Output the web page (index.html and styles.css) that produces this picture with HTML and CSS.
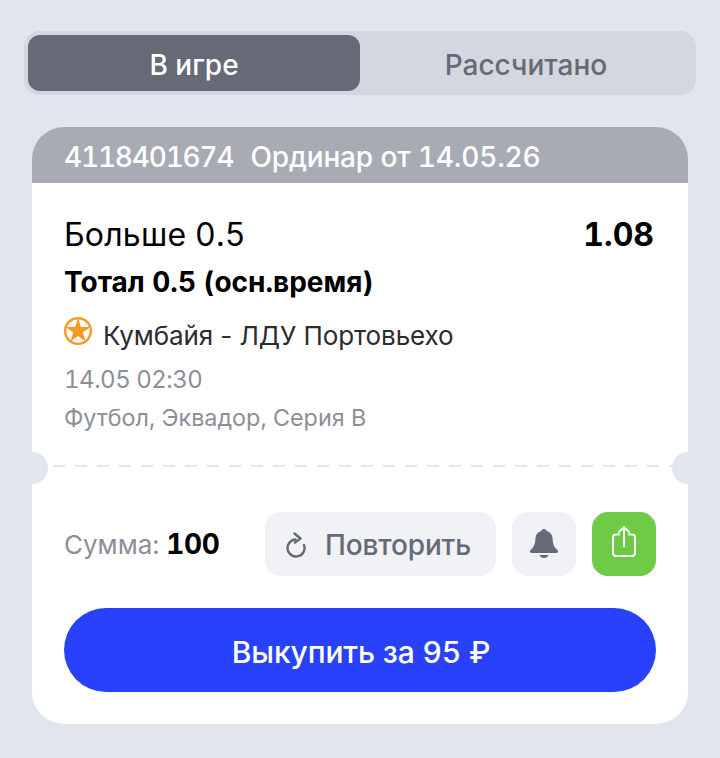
FILE: index.html
```html
<!DOCTYPE html>
<html lang="ru">
<head>
<meta charset="utf-8">
<title>Ставка</title>
<link rel="stylesheet" href="styles.css">
</head>
<body>
<main class="page">
  <nav class="tabs">
    <div class="tab tab-active">В игре</div>
    <div class="tab">Рассчитано</div>
  </nav>
  <article class="card">
    <header class="card-head"><span class="bet-id">4118401674</span><span class="bet-date">Ординар от 14.05.26</span></header>
    <section class="details">
      <div class="row-top"><span class="pick">Больше 0.5</span><span class="odds">1.08</span></div>
      <div class="market">Тотал 0.5 (осн.время)</div>
      <div class="match">
        <svg class="ball" viewBox="0 0 28 28" width="28" height="28" aria-hidden="true">
          <circle cx="14" cy="14" r="14" fill="#f59a23"/>
          <circle cx="14" cy="14" r="11.6" fill="#fff"/>
          <path d="M14 1 L16.9 10 L26.4 10 L18.8 15.5 L21.6 24.5 L14 19 L6.4 24.5 L9.2 15.5 L1.6 10 L11.1 10Z" fill="#f59a23"/>
        </svg>
        <span>Кумбайя - ЛДУ Портовьехо</span>
      </div>
      <div class="date">14.05 02:30</div>
      <div class="league">Футбол, Эквадор, Серия В</div>
    </section>
    <div class="divider">
      <span class="notch notch-left"></span>
      <span class="notch notch-right"></span>
    </div>
    <section class="footer">
      <div class="actions">
        <div class="sum">Сумма: <b>100</b></div>
        <div class="buttons">
          <div class="btn btn-repeat">
            <svg class="repeat-icon" viewBox="0 0 21 26" width="21" height="26" aria-hidden="true">
              <path d="M10.5 7.5 A8.5 8.5 0 1 0 19 13" fill="none" stroke="#666976" stroke-width="2.4" stroke-linecap="round"/>
              <path d="M9.5 1.5 L15.5 6.5 L10 10.5" fill="none" stroke="#666976" stroke-width="2.4" stroke-linecap="round" stroke-linejoin="round"/>
            </svg>
            <span>Повторить</span>
          </div>
          <div class="btn btn-square">
            <svg viewBox="0 0 32 32" width="32" height="32" aria-hidden="true">
              <path d="M16 1 C17.5 1 18.3 1.9 18.7 3.1 C22.6 4.3 24.4 7.3 24.6 11 C24.9 15.9 26 19.1 29.6 22.3 C30.6 23.3 30.3 24.9 28.6 24.9 L3.4 24.9 C1.7 24.9 1.4 23.3 2.4 22.3 C6 19.1 7.1 15.9 7.4 11 C7.6 7.3 9.4 4.3 13.3 3.1 C13.7 1.9 14.5 1 16 1Z" fill="#666976"/>
              <path d="M11.5 27 L20.5 27 C19.8 29 18.2 30 16 30 C13.8 30 12.2 29 11.5 27Z" fill="#666976"/>
            </svg>
          </div>
          <div class="btn btn-square btn-share">
            <svg viewBox="0 0 32 36" width="32" height="36" aria-hidden="true">
              <g fill="none" stroke="#fff" stroke-width="2" stroke-linecap="round" stroke-linejoin="round">
                <path d="M16 20.5 L16 1.5"/>
                <path d="M11 6 L16 1.2 L21 6"/>
                <path d="M11 8.5 L8 8.5 C6 8.5 5 9.5 5 11.5 L5 27 C5 29 6 30 8 30 L24 30 C26 30 27 29 27 27 L27 11.5 C27 9.5 26 8.5 24 8.5 L21 8.5"/>
              </g>
            </svg>
          </div>
        </div>
      </div>
      <div class="buyout">Выкупить за 95 ₽</div>
    </section>
  </article>
</main>
</body>
</html>
```
FILE: styles.css
```css
* { box-sizing: border-box; }
html, body { margin: 0; padding: 0; }
body {
  width: 720px;
  height: 758px;
  background: #e0e5ee;
  font-family: Inter, "Liberation Sans", sans-serif;
  font-variant-numeric: tabular-nums;
  overflow: hidden;
}
.page { padding: 31px 24px 0; }
.tabs {
  display: flex;
  height: 64px;
  padding: 4px;
  border-radius: 16px;
  background: #d3d7df;
}
.tab {
  flex: 1;
  display: flex;
  align-items: center;
  justify-content: center;
  padding-top: 3px;
  border-radius: 12px;
  font-size: 28px;
  font-weight: 500;
  color: #666976;
}
.tab-active { background: #666976; color: #fff; }
.card {
  position: relative;
  margin: 32px 8px 0;
  height: 597px;
  border-radius: 32px;
  background: #fff;
  overflow: hidden;
}
.card-head {
  display: flex;
  gap: 17px;
  align-items: center;
  height: 56px;
  padding: 3px 32px 0;
  background: #a8abb4;
  color: #fff;
  font-size: 28px;
  font-weight: 500;
}
.bet-id { letter-spacing: -1.2px; }
.bet-date { letter-spacing: -0.15px; }
.details { padding: 32px 32px 0; }
.row-top {
  display: flex;
  justify-content: space-between;
  line-height: 40px;
  height: 40px;
  color: #000;
}
.pick { font-size: 32px; letter-spacing: 0.2px; }
.odds { font-size: 32px; font-weight: 700; padding-right: 2px; }
.market {
  margin-top: 9px;
  font-size: 28px;
  line-height: 36px;
  font-weight: 700;
  color: #000;
}
.match {
  display: flex;
  align-items: center;
  gap: 11px;
  margin-top: 17px;
  height: 36px;
  font-size: 26px;
  font-variant-numeric: normal;
  letter-spacing: -0.1px;
  color: #2b2c33;
}
.ball { flex: none; margin-top: -9px; }
.date {
  margin-top: 9px;
  font-size: 24px;
  line-height: 36px;
  letter-spacing: -0.5px;
  color: #8c8f99;
}
.league {
  margin-top: 2px;
  font-size: 23.35px;
  line-height: 36px;
  color: #8c8f99;
}
.divider {
  height: 2px;
  margin: 29px 16px 0 21px;
  background: repeating-linear-gradient(90deg, #e0e5ee 0 12px, transparent 12px 22px);
}
.notch {
  position: absolute;
  top: 324.5px;
  width: 32px;
  height: 32px;
  border-radius: 50%;
  background: #e0e5ee;
}
.notch-left { left: -16px; }
.notch-right { right: -16px; }
.footer { padding: 45px 32px 0; }
.actions {
  display: flex;
  align-items: center;
  justify-content: space-between;
  height: 64px;
}
.sum { font-size: 26px; color: #8c8f99; }
.sum b { font-size: 28px; font-weight: 700; color: #000; letter-spacing: -0.3px; }
.buttons { display: flex; gap: 16px; }
.btn {
  display: flex;
  align-items: center;
  justify-content: center;
  height: 64px;
  border-radius: 16px;
  background: #f0f2f6;
}
.btn-repeat {
  justify-content: flex-start;
  gap: 19px;
  width: 231px;
  padding: 2px 0 0 20px;
  font-size: 28px;
  font-weight: 500;
  letter-spacing: -0.15px;
  color: #666976;
}
.btn-square { width: 64px; }
.btn-share { background: #6ecb46; }
.buyout {
  display: flex;
  align-items: center;
  justify-content: center;
  height: 84px;
  margin-top: 32px;
  padding: 3px 0 0 2px;
  border-radius: 42px;
  background: #2842fb;
  color: #fff;
  font-size: 30px;
  font-weight: 500;
  letter-spacing: -0.15px;
}
```
